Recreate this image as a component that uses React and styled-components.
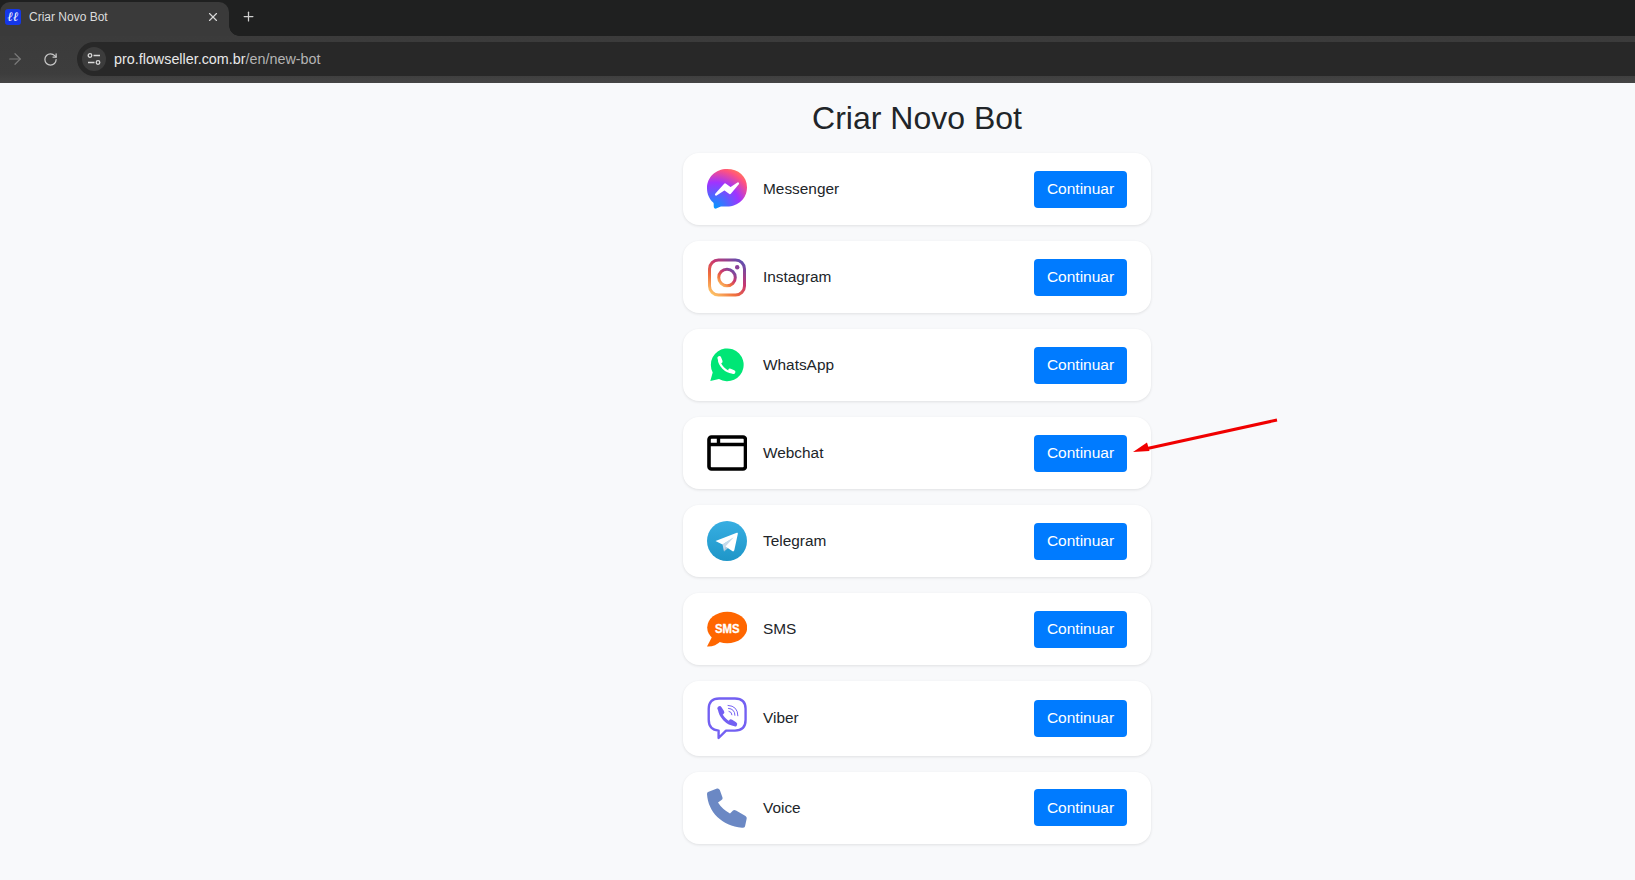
import React from "react";
import styled, { createGlobalStyle } from "styled-components";
import { ArrowRight, RotateCw, X, Plus } from "lucide-react";

const GlobalStyle = createGlobalStyle`
  html, body {
    margin: 0;
    padding: 0;
    background: #f8f9fb;
    font-family: "Liberation Sans", Arial, sans-serif;
  }
`;

const Screen = styled.div`
  position: relative;
  min-height: 880px;
  overflow: hidden;
`;

/* browser chrome */
const TabStrip = styled.div`
  display: flex;
  align-items: flex-end;
  height: 36px;
  background: #1f2020;
`;
const Tab = styled.div`
  position: relative;
  display: flex;
  align-items: center;
  width: 229px;
  height: 34px;
  box-sizing: border-box;
  padding: 0 9px 4px 5px;
  background: #3a3a3a;
  border-radius: 10px 10px 0 0;
  color: #dcdcdc;
  font-size: 12px;

  &::after {
    content: "";
    position: absolute;
    right: -10px;
    bottom: 0;
    width: 10px;
    height: 10px;
    background: radial-gradient(circle at 100% 0, transparent 9.5px, #3a3a3a 10px);
  }
`;
const Favicon = styled.div`
  display: flex;
  align-items: center;
  justify-content: center;
  width: 16px;
  height: 16px;
  margin-right: 8px;
  border-radius: 3px;
  background: #1537e8;
  color: #fff;
  font-family: "Liberation Serif", serif;
  font-style: italic;
  font-weight: bold;
  font-size: 13px;
  line-height: 16px;
`;
const TabTitle = styled.span`
  flex: 1;
`;
const NewTab = styled.div`
  display: flex;
  margin: 0 0 12px 12px;
  color: #cfcfcf;
`;
const Toolbar = styled.div`
  display: flex;
  align-items: center;
  height: 47px;
  box-sizing: border-box;
  padding: 0 0 1px 6px;
  background: linear-gradient(#3b3b3b, #3d3d3d 80%, #454545);
`;
const NavIcon = styled.div`
  display: flex;
  margin-right: ${(p) => p.$gap}px;
  color: ${(p) => p.$color};
`;
const UrlPill = styled.div`
  flex: 1;
  display: flex;
  align-items: center;
  height: 34px;
  padding-left: 5px;
  border-radius: 17px 0 0 17px;
  background: #282828;
  font-size: 14.35px;
  color: #e8e8e8;
`;
const SiteInfo = styled.div`
  display: flex;
  align-items: center;
  justify-content: center;
  width: 24px;
  height: 24px;
  margin-right: 8px;
  border-radius: 50%;
  background: #3c3c3c;
`;
const UrlPath = styled.span`
  color: #b4b4b4;
`;

/* page */
const Page = styled.main`
  display: flex;
  flex-direction: column;
  align-items: center;
  padding: 16px 0 0 199px;
`;
const Title = styled.h1`
  margin: 0 0 16px;
  font-size: 32px;
  font-weight: 400;
  line-height: 38px;
  color: #212529;
`;
const Card = styled.section`
  display: flex;
  align-items: center;
  width: 468px;
  box-sizing: border-box;
  margin-bottom: 16px;
  padding: 16px 24px;
  background: #fff;
  border-radius: 16px;
  box-shadow: 0 1px 3px rgba(0, 0, 0, 0.1);
`;
const IconBox = styled.svg`
  display: block;
  flex: none;
  width: 40px;
  height: ${(p) => p.$height || 40}px;
  margin-right: 16px;
`;
const Name = styled.span`
  flex: 1;
  font-size: 15.4px;
  color: #212529;
`;
const Button = styled.button`
  width: 93px;
  height: 37px;
  padding: 0;
  border: none;
  border-radius: 4px;
  background: #007bff;
  color: #fff;
  font-family: inherit;
  font-size: 15.5px;
`;
const Arrow = styled.svg`
  position: absolute;
  left: 1125px;
  top: 412px;
`;

const HANDSET =
  "M1 4 L10 .5 Q12 0 12.8 2 L15.5 9.5 Q16 11 14.5 12 L11 14.5 Q15 21 23 25.5 L26 22.5 Q27 21.5 29 22.5 L38.5 28 Q40 29 39.7 30.5 L38 38.5 Q37.5 40 35 39.8 C15 38 1 24 0 6 Q0 4.5 1 4Z";

const Messenger = () => (
  <IconBox viewBox="0 0 40 40">
    <defs>
      <radialGradient id="ms" cx="0.19" cy="0.99" r="1.09">
        <stop offset="0" stopColor="#0099ff" />
        <stop offset="0.6" stopColor="#a033ff" />
        <stop offset="0.9" stopColor="#ff5280" />
        <stop offset="1" stopColor="#ff7061" />
      </radialGradient>
    </defs>
    <path
      fill="url(#ms)"
      d="M20 0C8.7 0 0 8.2 0 19.3c0 5.8 2.4 10.8 6.2 14.3.6.6.5 1 .6 4.5.1 1 .9 1.9 2.400 1.500l4-1.800c.7-.2 1.400-.2 6.800-.2 11.300 0 20-8.200 20-19.300S31.300 0 20 0z"
    />
    <path
      fill="#fff"
      stroke="#fff"
      strokeWidth="2.200"
      strokeLinejoin="round"
      d="M9 25.500L18 15.500L23.500 19.500L31 14.500L23 24L17.500 20Z"
    />
  </IconBox>
);

const Instagram = () => (
  <IconBox viewBox="0 0 40 40">
    <defs>
      <linearGradient id="ig" x1="0.1" y1="1" x2="0.9" y2="0">
        <stop offset="0" stopColor="#fdc468" />
        <stop offset="0.3" stopColor="#f0703c" />
        <stop offset="0.6" stopColor="#c9366f" />
        <stop offset="1" stopColor="#5f4fb0" />
      </linearGradient>
    </defs>
    <rect x="2.500" y="3" width="35" height="35" rx="9" fill="none" stroke="url(#ig)" strokeWidth="3" />
    <circle cx="20" cy="20.500" r="8.300" fill="none" stroke="url(#ig)" strokeWidth="3" />
    <circle cx="30.200" cy="10.300" r="2.200" fill="#8a3f98" />
  </IconBox>
);

const WhatsApp = () => (
  <IconBox viewBox="0 0 40 40">
    <g transform="translate(-1.500 0)">
      <path fill="#00e676" d="M4.800 36l2.400-8.600A16.400 16.400 0 1 1 13.500 34Z" />
      <g fill="none" stroke="#fff" strokeLinecap="round">
        <path strokeWidth="2.200" d="M13.500 14C13.500 20 20 27.500 27.500 27.500" />
        <path strokeWidth="3.800" d="M13.800 13L15.200 16.500" />
        <path strokeWidth="3.800" d="M24.500 25.500L28 27" />
      </g>
    </g>
  </IconBox>
);

const Webchat = () => (
  <IconBox viewBox="0 0 40 40">
    <rect x="2" y="4" width="36.500" height="32" rx="2.500" fill="none" stroke="#000" strokeWidth="3.600" />
    <path stroke="#000" strokeWidth="3.400" d="M2 11.500H38.500" />
    <path stroke="#000" strokeWidth="3.400" d="M11.500 4V11.500" />
  </IconBox>
);

const Telegram = () => (
  <IconBox viewBox="0 0 40 40">
    <defs>
      <linearGradient id="tg" x1="0.5" y1="0" x2="0.5" y2="1">
        <stop offset="0" stopColor="#37aee2" />
        <stop offset="1" stopColor="#1e96c8" />
      </linearGradient>
    </defs>
    <circle cx="20" cy="20" r="20" fill="url(#tg)" />
    <path fill="#c8daea" d="M15.500 23.500L17 30.500l2.500-4.500L27 16Z" />
    <path fill="#a9c9dd" d="M17 30.500l4.500-3.800-2.700-1.700Z" />
    <path fill="#fff" d="M8.500 20L29.800 11.800C30.600 11.500 31 12 30.800 13L27.300 29.300C27 30.500 26 30.700 25.200 30.100L18.500 25.400 26.500 16.500 15.500 23.500Z" />
  </IconBox>
);

const Sms = () => (
  <IconBox viewBox="0 0 40 40">
    <ellipse cx="20.200" cy="18.500" rx="20" ry="15.800" fill="#ff6600" />
    <path fill="#ff6600" d="M6 26L0 37.500Q8 38 14 32Z" />
    <text
      x="8"
      y="23.500"
      textLength="24.500"
      lengthAdjust="spacingAndGlyphs"
      fill="#fff"
      stroke="#fff"
      strokeWidth="0.350"
      fontFamily="'Liberation Sans', Arial, sans-serif"
      fontSize="12"
      fontWeight="700"
    >
      SMS
    </text>
  </IconBox>
);

const Viber = () => (
  <IconBox viewBox="0 0 40 43" $height={42.5}>
    <path
      fill="none"
      stroke="#7360f2"
      strokeWidth="2.400"
      strokeLinejoin="round"
      d="M12 1.500H28Q38.800 1.500 38.800 12V23Q38.800 34 28 34H19L11.500 41.500V34Q1.500 33 1.500 23V12Q1.500 1.500 12 1.500Z"
    />
    <g fill="none" stroke="#7360f2" strokeLinecap="round">
      <path strokeWidth="3" d="M12.500 12C12.500 19 20 27.500 28 27.500" />
      <path strokeWidth="4.600" d="M12.500 11.500L15 15.500" />
      <path strokeWidth="4.600" d="M24 25L28 27.500" />
      <path strokeWidth="1" d="M21 8.500Q31 9 31 19M21.500 11.500Q28 12 28 18.500M22 14.500Q25 15 25 18" />
    </g>
  </IconBox>
);

const Voice = () => (
  <IconBox viewBox="0 0 40 40">
    <path fill="#6b88c4" d={HANDSET} />
  </IconBox>
);

const channels = [
  { name: "Messenger", Icon: Messenger },
  { name: "Instagram", Icon: Instagram },
  { name: "WhatsApp", Icon: WhatsApp },
  { name: "Webchat", Icon: Webchat },
  { name: "Telegram", Icon: Telegram },
  { name: "SMS", Icon: Sms },
  { name: "Viber", Icon: Viber },
  { name: "Voice", Icon: Voice },
];

export default function App() {
  return (
    <Screen>
      <GlobalStyle />
      <TabStrip>
        <Tab>
          <Favicon>ℓℓ</Favicon>
          <TabTitle>Criar Novo Bot</TabTitle>
          <X size={14} color="#d8d8d8" strokeWidth={2} />
        </Tab>
        <NewTab>
          <Plus size={15} strokeWidth={2} />
        </NewTab>
      </TabStrip>
      <Toolbar>
        <NavIcon $gap={19} $color="#7a7a7a">
          <ArrowRight size={18} strokeWidth={1.6} />
        </NavIcon>
        <NavIcon $gap={19} $color="#c8c8c8">
          <RotateCw size={15} strokeWidth={2} />
        </NavIcon>
        <UrlPill>
          <SiteInfo>
            <svg width="14" height="14" viewBox="0 0 14 14" fill="none" stroke="#d8d8d8" strokeWidth="1.300">
              <circle cx="3" cy="3.500" r="1.800" />
              <path d="M6.500 3.500H13M1 10.500H7.500" />
              <circle cx="11" cy="10.500" r="1.800" />
            </svg>
          </SiteInfo>
          pro.flowseller.com.br<UrlPath>/en/new-bot</UrlPath>
        </UrlPill>
      </Toolbar>
      <Page>
        <Title>Criar Novo Bot</Title>
        {channels.map(({ name, Icon }) => (
          <Card key={name}>
            <Icon />
            <Name>{name}</Name>
            <Button>Continuar</Button>
          </Card>
        ))}
      </Page>
      <Arrow width="160" height="48" viewBox="0 0 160 48">
        <path d="M152 8L20 37" stroke="#f00000" strokeWidth="3" />
        <path d="M8 40L22 30.500 24.500 39Z" fill="#f00000" />
      </Arrow>
    </Screen>
  );
}
